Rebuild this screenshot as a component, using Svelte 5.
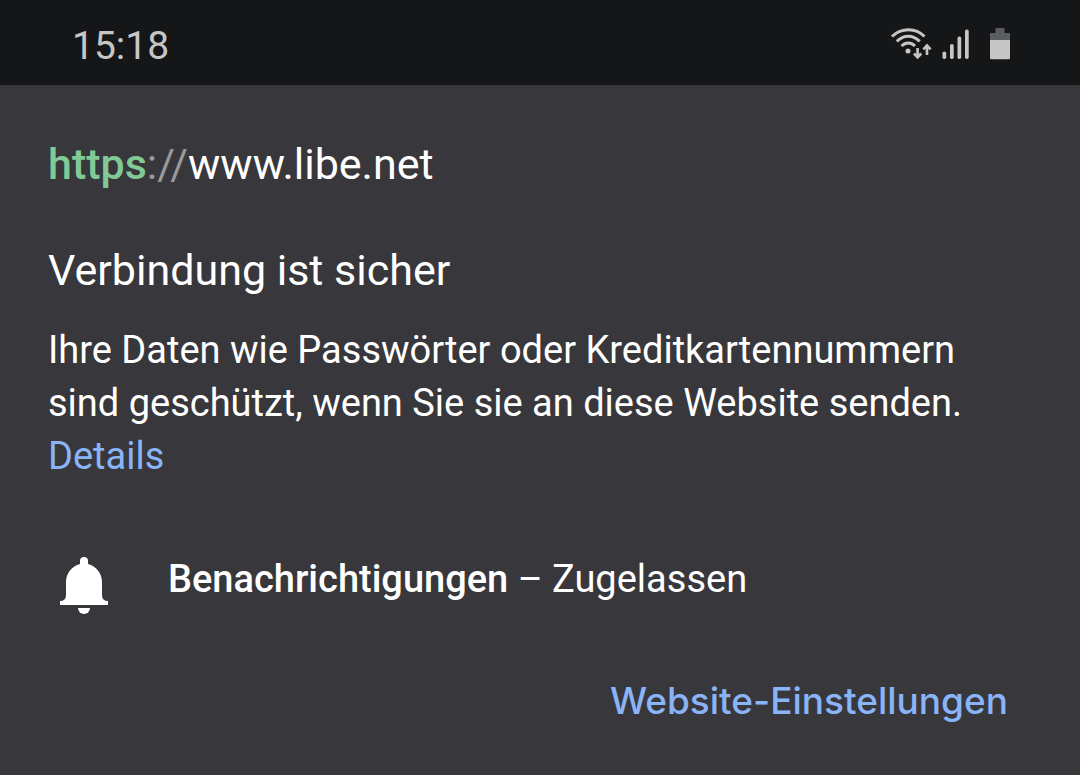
<script lang="ts">
  const time = '15:18';
  const site = { scheme: 'https', separator: '://', host: 'www.libe.net' };
  const permission = { name: 'Benachrichtigungen', state: 'Zugelassen' };
</script>

<header class="status">
  <time class="status__time">{time}</time>
  <div class="status__icons">
    <svg width="42" height="33" viewBox="0 0 42 33" fill="none" stroke="currentColor" stroke-width="3" role="img" aria-label="WLAN">
      <path d="M2 9.5C11.5.5 25.5.5 34.5 9.5" />
      <path d="M6.8 14.4c6.7-6.9 16.2-6.9 22.9 0" />
      <path d="M11.5 19c4-4 9.5-4 13.5 0" />
      <circle cx="18" cy="24" r="2.5" fill="currentColor" stroke="none" />
      <path d="M27.6 21v9M37 28v-9" stroke-width="2.6" />
      <path d="m24 26.5 3.6 3.8 3.6-3.8M33.4 22.3l3.6-3.8 3.6 3.8" stroke-width="2.6" />
    </svg>
    <svg width="28" height="33" viewBox="0 0 28 33" fill="currentColor" role="img" aria-label="Mobilfunk">
      <rect x="0.5" y="24.5" width="3.7" height="7.5" rx="1.7" />
      <rect x="8" y="17" width="3.7" height="15" rx="1.7" />
      <rect x="15.5" y="9.5" width="3.7" height="22.5" rx="1.7" />
      <rect x="23" y="2.5" width="3.7" height="29.5" rx="1.7" />
    </svg>
    <svg class="status__battery" width="20" height="33" viewBox="0 0 20 33" role="img" aria-label="Akku">
      <path d="M5.5 2q0-1 1-1h7q1 0 1 1v4H19q1 0 1 1v7H0V7q0-1 1-1h4.5z" fill="#5c5d5e" />
      <path d="M0 13h20v18q0 1.3-1.3 1.3H1.3Q0 32.3 0 31z" fill="currentColor" />
    </svg>
  </div>
</header>

<main class="info">
  <p class="info__url">
    <span class="info__scheme">{site.scheme}</span><span class="info__separator">{site.separator}</span>{site.host}
  </p>

  <h1 class="info__title">Verbindung ist sicher</h1>
  <p class="info__text">
    Ihre Daten wie Passwörter oder Kreditkartennummern sind geschützt, wenn Sie sie an diese Website
    senden. <a href="#details">Details</a>
  </p>

  <div class="permission">
    <svg class="permission__icon" width="72" height="72" viewBox="0 0 72 72" fill="currentColor" aria-hidden="true">
      <path d="M32 13v-3a4 4 0 0 1 8 0v3c8 2 14 9 14 18v13q0 6 6 6v4H12v-4q6 0 6-6V31c0-9 6-16 14-18z" />
      <path d="M30 57h12a6 6 0 0 1-12 0z" />
    </svg>
    <span><strong>{permission.name}</strong> – {permission.state}</span>
  </div>

  <button type="button" class="info__settings">Website-Einstellungen</button>
</main>

<style>
  :global(body) {
    margin: 0;
    background: #38373c;
    color: #fff;
    font-family: Roboto, sans-serif;
  }
  .status {
    display: flex;
    align-items: center;
    justify-content: space-between;
    padding: 16px 70px 15px 72px;
    background: #151618;
    color: #c6c6c7;
  }
  .status__time {
    font-size: 39px;
    line-height: 48px;
    padding-top: 6px;
  }
  .status__icons {
    display: flex;
    gap: 10px;
    padding-top: 1px;
  }
  .status__battery {
    margin-left: 10px;
  }
  .info {
    display: flex;
    flex-direction: column;
    padding: 55px 48px 48px;
  }
  .info__url {
    margin: 0;
    font-size: 43px;
    line-height: 48px;
  }
  .info__scheme {
    color: #81c995;
    font-weight: 500;
  }
  .info__separator {
    color: #9a9a9d;
  }
  .info__title {
    margin: 56px 0 0;
    font-size: 43px;
    line-height: 52px;
    font-weight: 400;
  }
  .info__text {
    margin: 28px 0 0;
    font-size: 38px;
    line-height: 53px;
  }
  .info__text a {
    color: #8ab4f8;
    text-decoration: none;
  }
  .permission {
    display: flex;
    gap: 48px;
    margin-top: 68px;
    font-size: 38px;
    line-height: 56px;
  }
  .permission__icon {
    flex: none;
  }
  strong {
    font-weight: 500;
  }
  .info__settings {
    align-self: flex-end;
    margin-top: 54px;
    padding: 0 24px 0 0;
    border: none;
    background: none;
    color: #8ab4f8;
    font: 500 37px/48px Inter, sans-serif;
    cursor: pointer;
  }
</style>
